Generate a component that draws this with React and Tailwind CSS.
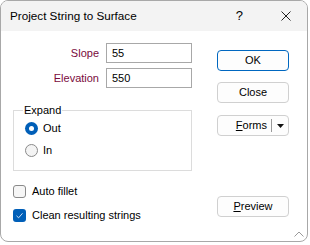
import React from "react";

const font = { fontFamily: '"Liberation Sans", Arial, sans-serif' };

function Btn({ children, primary, className = "" }) {
  return (
    <div
      className={
        "h-[21px] w-[72px] rounded-[4px] border flex items-center justify-center text-[11px] text-black bg-[#fdfdfd] " +
        (primary ? "border-[#0067c0] " : "border-[#d0d0d0] ") +
        className
      }
    >
      {children}
    </div>
  );
}

function Radio({ checked, label }) {
  return (
    <div className="h-[20px] flex items-center">
      {checked ? (
        <div className="w-[13px] h-[13px] rounded-full bg-[#005fb8] flex items-center justify-center">
          <div className="w-[5px] h-[5px] rounded-full bg-white" />
        </div>
      ) : (
        <div className="w-[13px] h-[13px] rounded-full border border-[#8a8a8a] bg-[#f4f4f4]" />
      )}
      <span className="ml-[5px] text-[11px] text-black">{label}</span>
    </div>
  );
}

function Check({ checked, label }) {
  return (
    <div className="h-[16px] flex items-center">
      {checked ? (
        <div className="w-[13px] h-[13px] rounded-[3px] bg-[#005fb8] flex items-center justify-center">
          <svg width="9" height="9" viewBox="0 0 9 9">
            <path d="M1.5 4.8 L3.6 6.8 L7.5 2.3" fill="none" stroke="#cfe0f4" strokeWidth="1" />
          </svg>
        </div>
      ) : (
        <div className="w-[13px] h-[13px] rounded-[3px] border border-[#8a8a8a] bg-[#f6f6f6]" />
      )}
      <span className="ml-[6px] text-[11px] text-black">{label}</span>
    </div>
  );
}

export default function App() {
  return (
    <div className="w-[310px] h-[245px] bg-white" style={font}>
      <div className="w-[308px] h-[242px] border border-[#a8a8a8] rounded-[8px] overflow-hidden flex flex-col bg-white">
        <div className="h-[30px] bg-[#f3f3f3] flex items-center shrink-0">
          <span className="ml-[9px] text-[11.7px] text-black">Project String to Surface</span>
          <span className="ml-auto text-[13px] text-black">?</span>
          <svg className="ml-[38px] mr-[16px]" width="10" height="10" viewBox="0 0 10 10">
            <path d="M0.5 0.5 L9.5 9.5 M9.5 0.5 L0.5 9.5" stroke="#222" strokeWidth="1" />
          </svg>
        </div>
        <div className="flex-1 flex">
          <div className="ml-[12px] w-[179px] pt-[12px] flex flex-col">
            <div className="flex items-center h-[20px]">
              <span className="w-[86px] text-right text-[11px] text-[#7a0a3c]">Slope</span>
              <div className="ml-[7px] w-[86px] h-[20px] border border-[#a8a8a8] flex items-center pl-[5px] text-[11px] text-black">
                55
              </div>
            </div>
            <div className="flex items-center h-[20px] mt-[5px]">
              <span className="w-[86px] text-right text-[11px] text-[#7a0a3c]">Elevation</span>
              <div className="ml-[7px] w-[86px] h-[20px] border border-[#a8a8a8] flex items-center pl-[5px] text-[11px] text-black">
                550
              </div>
            </div>
            <fieldset className="mt-[14px] w-[179px] border border-[#dcdcdc] pl-[11px] pb-[10px]">
              <legend className="ml-[-2px] px-[1px] text-[11px] leading-[16px] text-black">Expand</legend>
              <Radio checked label="Out" />
              <div className="mt-[2px]">
                <Radio label="In" />
              </div>
            </fieldset>
            <div className="mt-[12px]">
              <Check label="Auto fillet" />
            </div>
            <div className="mt-[8px]">
              <Check checked label="Clean resulting strings" />
            </div>
          </div>
          <div className="ml-[25px] pt-[19px] flex flex-col">
            <Btn primary>OK</Btn>
            <Btn className="mt-[11px]">Close</Btn>
            <div className="mt-[12px] h-[21px] w-[72px] rounded-[4px] border border-[#d0d0d0] bg-[#fdfdfd] flex items-center text-[11px] text-black">
              <span className="flex-1 text-right pr-[4px]">
                <span className="underline">F</span>orms
              </span>
              <div className="w-px h-[13px] bg-[#9a9a9a]" />
              <div className="w-[16px] flex items-center justify-center">
                <svg width="7" height="4" viewBox="0 0 7 4">
                  <path d="M0 0 L7 0 L3.5 4 Z" fill="#111" />
                </svg>
              </div>
            </div>
            <Btn className="mt-[60px]">
              <span>
                <span className="underline">P</span>review
              </span>
            </Btn>
          </div>
        </div>
        <div className="h-0 relative">
          <svg className="absolute right-[3px] bottom-[4px]" width="10" height="6" viewBox="0 0 10 6">
            <path d="M0.5 5.5 L5 1 L9.5 5.5" fill="none" stroke="#9a9a9a" strokeWidth="1" />
          </svg>
        </div>
      </div>
    </div>
  );
}
